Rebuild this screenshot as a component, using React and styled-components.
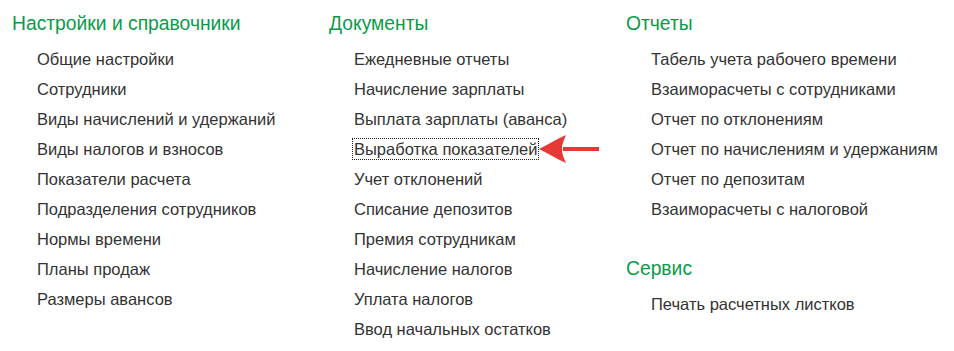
import styled, { createGlobalStyle } from "styled-components";

const GlobalStyle = createGlobalStyle`
  html, body {
    margin: 0;
    padding: 0;
    background: #fff;
  }
  body {
    font-family: Arial, "Liberation Sans", sans-serif;
  }
`;

const sections = [
  {
    groups: [
      {
        title: "Настройки и справочники",
        items: [
          "Общие настройки",
          "Сотрудники",
          "Виды начислений и удержаний",
          "Виды налогов и взносов",
          "Показатели расчета",
          "Подразделения сотрудников",
          "Нормы времени",
          "Планы продаж",
          "Размеры авансов",
        ],
      },
    ],
  },
  {
    groups: [
      {
        title: "Документы",
        items: [
          "Ежедневные отчеты",
          "Начисление зарплаты",
          "Выплата зарплаты (аванса)",
          "Выработка показателей",
          "Учет отклонений",
          "Списание депозитов",
          "Премия сотрудникам",
          "Начисление налогов",
          "Уплата налогов",
          "Ввод начальных остатков",
        ],
      },
    ],
  },
  {
    groups: [
      {
        title: "Отчеты",
        items: [
          "Табель учета рабочего времени",
          "Взаиморасчеты с сотрудниками",
          "Отчет по отклонениям",
          "Отчет по начислениям и удержаниям",
          "Отчет по депозитам",
          "Взаиморасчеты с налоговой",
        ],
      },
      {
        title: "Сервис",
        items: ["Печать расчетных листков"],
      },
    ],
  },
];

const FOCUSED = "Выработка показателей";

const Arrow = () => (
  <ArrowSvg width="60" height="30" viewBox="0 0 60 30">
    <path d="M24 13 L60 13 L60 17 L24 17 Z" fill="#e53935" />
    <path
      d="M0 15 C8 11 18 5 27 1 C24 8 23 11 23 15 C23 19 24 22 27 29 C18 25 8 19 0 15 Z"
      fill="#e53935"
    />
  </ArrowSvg>
);

const App = () => {
  return (
    <>
      <GlobalStyle />
      <Page>
        {sections.map((col, ci) => (
          <Column key={ci}>
            {col.groups.map((g) => (
              <Group key={g.title}>
                <Title>{g.title}</Title>
                <List>
                  {g.items.map((item) => (
                    <Item key={item}>
                      <Link $focused={item === FOCUSED}>
                        {item}
                        {item === FOCUSED && <Arrow />}
                      </Link>
                    </Item>
                  ))}
                </List>
              </Group>
            ))}
          </Column>
        ))}
      </Page>
    </>
  );
};

export default App;

const Page = styled.div`
  display: grid;
  grid-template-columns: 317px 297px 1fr;
  padding: 12px 0 0 12px;
  width: 954px;
  height: 351px;
  box-sizing: border-box;
`;

const Column = styled.div`
  display: flex;
  flex-direction: column;
  gap: 33px;
`;

const Group = styled.div`
  display: flex;
  flex-direction: column;
`;

const Title = styled.div`
  color: #0a9b4a;
  font-size: 19.3px;
  line-height: 24px;
  margin-bottom: 8px;
`;

const List = styled.ul`
  list-style: none;
  margin: 0;
  padding: 0 0 0 25px;
`;

const Item = styled.li`
  height: 30px;
  display: flex;
  align-items: center;
`;

const Link = styled.span`
  position: relative;
  color: #333;
  font-size: 16.5px;
  line-height: 20px;
  padding: 0 1px;
  margin-left: -2px;
  border: 1px dotted ${(p) => (p.$focused ? "#222" : "transparent")};
`;

const ArrowSvg = styled.svg`
  position: absolute;
  left: 100%;
  top: 50%;
  margin-top: -15px;
  margin-left: 1px;
`;
